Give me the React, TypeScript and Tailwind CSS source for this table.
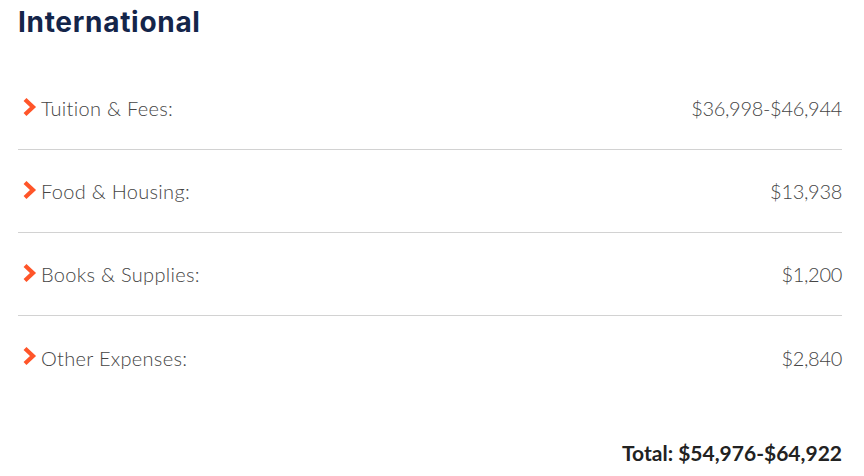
const rows = [
  { label: "Tuition & Fees:", value: "$36,998-$46,944" },
  { label: "Food & Housing:", value: "$13,938" },
  { label: "Books & Supplies:", value: "$1,200" },
  { label: "Other Expenses:", value: "$2,840" },
];

function Chevron() {
  return (
    <svg width="15" height="20" viewBox="0 0 15 20" className="shrink-0 -mt-[3px]">
      <path d="M3 2.5 L11 10 L3 17.5" fill="none" stroke="#ff5529" strokeWidth="4.2" strokeLinejoin="miter" />
    </svg>
  );
}

export default function App() {
  return (
    <div className="w-[864px] h-[476px] bg-white pl-[18px] pr-[22px] pt-[4px]" style={{ fontFamily: "Lato, 'Open Sans', sans-serif" }}>
      <h2
        className="text-[28px] leading-[36px] font-bold tracking-[0.7px] text-[#14254a]"
        style={{ fontFamily: "Inter, 'Noto Sans', sans-serif" }}
      >
        International
      </h2>

      <div className="mt-[27px]">
        {rows.map((row, i) => (
          <div
            key={row.label}
            className={`flex items-center justify-between h-[83px] ${i < rows.length - 1 ? "border-b border-[#d2d2d2]" : ""}`}
          >
            <div className="flex items-center gap-[4px] pl-[4px]">
              <Chevron />
              <span className="text-[20px] tracking-[0.3px] font-light text-[#454545]">{row.label}</span>
            </div>
            <span className="text-[20px] tracking-[-0.3px] font-light text-[#454545]">{row.value}</span>
          </div>
        ))}
      </div>

      <div className="flex justify-end mt-[38px]">
        <span className="text-[21px] font-bold text-[#222]">Total: $54,976-$64,922</span>
      </div>
    </div>
  );
}
